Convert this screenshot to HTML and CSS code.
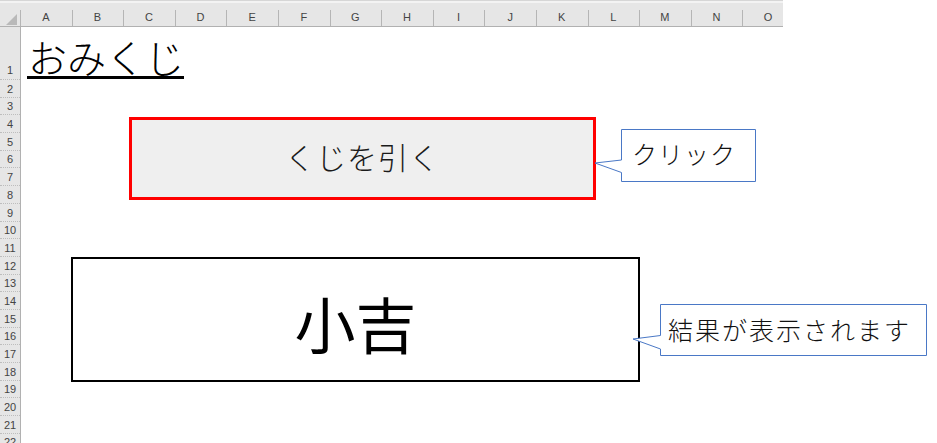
FILE: index.html
```html
<!DOCTYPE html>
<html lang="ja">
<head>
<meta charset="utf-8">
<title>おみくじ</title>
<link rel="stylesheet" href="styles.css">
</head>
<body>
<div class="sheet">
  <div class="topbar"></div>
  <div class="colhead">
    <div class="corner">
      <svg class="corner-tri" width="12" height="12" viewBox="0 0 12 12"><polygon points="0,11 11,0 11,11" fill="#b9b9b9"/></svg>
    </div>
    <div class="col">A</div><div class="col">B</div><div class="col">C</div><div class="col">D</div><div class="col">E</div>
    <div class="col">F</div><div class="col">G</div><div class="col">H</div><div class="col">I</div><div class="col">J</div>
    <div class="col">K</div><div class="col">L</div><div class="col">M</div><div class="col">N</div><div class="col">O</div>
  </div>
  <div class="body">
    <div class="rowhead">
      <div class="rh rh1">1</div>
      <div class="rh">2</div><div class="rh">3</div><div class="rh">4</div><div class="rh">5</div>
      <div class="rh">6</div><div class="rh">7</div><div class="rh">8</div><div class="rh">9</div>
      <div class="rh">10</div><div class="rh">11</div><div class="rh">12</div><div class="rh">13</div>
      <div class="rh">14</div><div class="rh">15</div><div class="rh">16</div><div class="rh">17</div>
      <div class="rh">18</div><div class="rh">19</div><div class="rh">20</div><div class="rh">21</div>
      <div class="rh">22</div>
    </div>
    <div class="grid">
      <div class="row1"><span class="title">おみくじ</span></div>

      <div class="btn">くじを引く</div>

      <div class="callout callout-click">
        <svg class="callout-shape" width="170" height="60" viewBox="-30 -2 170 60">
          <path d="M0.5 0.5 H134.5 V52.5 H0.5 V43.5 L-26 34 L0.5 31 Z" fill="#fff" stroke="#4a78c6" stroke-width="1"/>
        </svg>
        <span class="callout-text">クリック</span>
      </div>

      <div class="result">小吉</div>

      <div class="callout callout-result">
        <svg class="callout-shape" width="300" height="60" viewBox="-30 -2 300 60">
          <path d="M0.5 0.5 H266.5 V51.5 H0.5 V45 L-27 35 L0.5 31.5 Z" fill="#fff" stroke="#4a78c6" stroke-width="1"/>
        </svg>
        <span class="callout-text">結果が表示されます</span>
      </div>
    </div>
  </div>
</div>
</body>
</html>
```

FILE: styles.css
```css
* { box-sizing: border-box; }

html, body {
  margin: 0;
  padding: 0;
  background: #ffffff;
}

body {
  width: 937px;
  height: 443px;
  overflow: hidden;
  font-family: "Noto Sans CJK JP", "Noto Sans", sans-serif;
  color: #000;
}

.sheet {
  display: flex;
  flex-direction: column;
  width: 937px;
  height: 443px;
}

.topbar {
  width: 783px;
  height: 3px;
  background: #f3f3f3;
  border-top: 1px solid #d6d6d6;
  flex: none;
}

.colhead {
  display: flex;
  width: 783px;
  height: 24px;
  flex: none;
  overflow: hidden;
  background: #e6e6e6;
  border-bottom: 1px solid #b1b1b1;
}

.corner {
  position: relative;
  width: 20px;
  flex: none;
}

.corner-tri {
  position: absolute;
  left: 6px;
  top: 11px;
}

.col {
  position: relative;
  width: 51.6px;
  flex: none;
  display: flex;
  align-items: center;
  justify-content: center;
  padding-top: 4px;
  font-family: "Liberation Sans", Arial, sans-serif;
  font-size: 11px;
  color: #444;
}

.col::before {
  content: "";
  position: absolute;
  left: 0;
  top: 7px;
  bottom: 0;
  width: 1px;
  background: #b5b5b5;
}

.col:first-of-type::before {
  background: #d0d0d0;
}

.body {
  display: flex;
  flex: 1;
  min-height: 0;
}

.rowhead {
  width: 21px;
  flex: none;
  background: #e6e6e6;
  border-right: 1px solid #b1b1b1;
  display: flex;
  flex-direction: column;
}

.rh {
  height: 17.7px;
  flex: none;
  display: flex;
  align-items: flex-end;
  justify-content: center;
  padding-bottom: 2px;
  font-family: "Liberation Sans", Arial, sans-serif;
  font-size: 11px;
  line-height: 12px;
  color: #444;
  border-bottom: 1px dotted #bdbdbd;
}

.rh1 {
  height: 53px;
  padding-bottom: 3px;
}

.grid {
  position: relative;
  flex: 1;
}

.row1 {
  height: 53px;
  display: flex;
  align-items: flex-end;
  padding-left: 6px;
  padding-bottom: 1px;
}

.title {
  display: inline-block;
  font-size: 39px;
  line-height: 40px;
  font-weight: 300;
  border-bottom: 3px solid #000;
  padding: 0 0 0 1px;
}

.btn {
  position: absolute;
  left: 108px;
  top: 90px;
  width: 467px;
  height: 83px;
  border: 3px solid #ff0000;
  background: #efefef;
  display: flex;
  align-items: center;
  justify-content: center;
  padding-bottom: 6px;
  font-size: 30px;
  font-weight: 300;
  color: #1a1a1a;
  letter-spacing: 1px;
}

.result {
  position: absolute;
  left: 50px;
  top: 230px;
  width: 569px;
  height: 125px;
  border: 2px solid #000;
  background: #fff;
  display: flex;
  align-items: center;
  justify-content: center;
  padding-top: 6px;
  font-size: 61px;
  font-weight: 400;
  line-height: 1;
  color: #000;
}

.callout {
  position: absolute;
}

.callout-shape {
  position: absolute;
  left: -30px;
  top: -2px;
  overflow: visible;
}

.callout-text {
  position: absolute;
  font-size: 25px;
  line-height: 30px;
  font-weight: 300;
  color: #111;
  white-space: nowrap;
}

.callout-click {
  left: 600px;
  top: 102px;
  width: 135px;
  height: 53px;
}

.callout-click .callout-text {
  left: 11px;
  top: 9px;
  letter-spacing: 1px;
}

.callout-result {
  left: 639px;
  top: 277px;
  width: 267px;
  height: 52px;
}

.callout-result .callout-text {
  left: 8px;
  top: 10px;
  letter-spacing: 2px;
}
```
